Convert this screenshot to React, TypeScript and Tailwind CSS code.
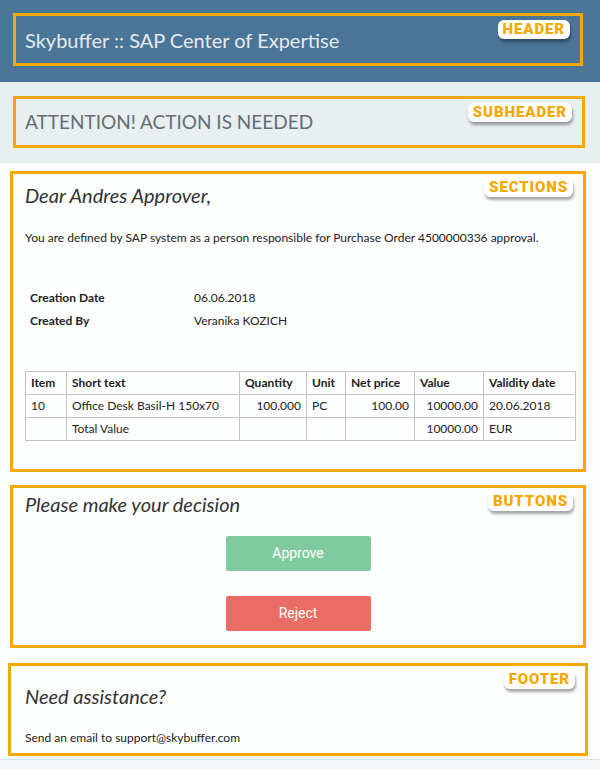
import React from 'react'

const body = "font-['Lato','Open_Sans',sans-serif]"

function Tag({ label }: { label: string }) {
  return (
    <span className="absolute right-[10px] top-[4px] rounded-[6px] bg-white px-[5px] py-[1px] font-['Roboto',sans-serif] text-[15px] font-black leading-[17px] tracking-[0.06em] text-[#f5a800] shadow-[1px_3px_3px_rgba(0,0,0,0.35)]">
      {label}
    </span>
  )
}

const rows = [
  ['10', 'Office Desk Basil-H 150x70', '100.000', 'PC', '100.00', '10000.00', '20.06.2018'],
  ['', 'Total Value', '', '', '', '10000.00', 'EUR'],
]

const cols = [
  { label: 'Item', w: 'w-[41px]' },
  { label: 'Short text', w: 'w-[173px]' },
  { label: 'Quantity', w: 'w-[67px]', right: true },
  { label: 'Unit', w: 'w-[39px]' },
  { label: 'Net price', w: 'w-[69px]', right: true },
  { label: 'Value', w: 'w-[69px]', right: true },
  { label: 'Validity date', w: 'w-[92px]' },
]

export default function App() {
  return (
    <div className={`w-[600px] bg-[#fdfefe] ${body} text-[#222]`}>
      {/* Header */}
      <div className="bg-[#4a7599] pl-[13px] pr-[17px] pt-[13px] pb-[16px]">
        <div className="relative flex h-[53px] items-center border-[3px] border-[#f5a800] pl-[9px]">
          <h1 className="text-[20px] text-[#e6eaee]">Skybuffer :: SAP Center of Expertise</h1>
          <Tag label="HEADER" />
        </div>
      </div>

      {/* Subheader */}
      <div className="bg-[#e7eff0] pl-[13px] pr-[15px] pt-[14px] pb-[15px]">
        <div className="relative flex h-[52px] items-center border-[3px] border-[#f5a800] pl-[9px]">
          <h2 className="text-[19px] text-[#666d72]">ATTENTION! ACTION IS NEEDED</h2>
          <Tag label="SUBHEADER" />
        </div>
      </div>

      {/* Sections */}
      <div className="relative mx-[10px] mt-[8px] h-[301px] w-[576px] border-[3px] border-[#f5a800] px-[12px] pt-[9px]">
        <Tag label="SECTIONS" />
        <p className="text-[20px] italic leading-[24px] text-[#333]">Dear Andres Approver,</p>
        <p className="mt-[24px] text-[12px] leading-[14px]">
          You are defined by SAP system as a person responsible for Purchase Order 4500000336 approval.
        </p>
        <div className="mt-[46px] flex flex-col gap-[9px] pl-[5px] text-[12px] leading-[14px]">
          <div className="flex">
            <span className="w-[164px] font-bold">Creation Date</span>
            <span>06.06.2018</span>
          </div>
          <div className="flex">
            <span className="w-[164px] font-bold">Created By</span>
            <span>Veranika KOZICH</span>
          </div>
        </div>
        <table className="mt-[43px] w-[550px] table-fixed border-collapse text-[12px] leading-[14px]">
          <thead>
            <tr className="h-[23px]">
              {cols.map((c) => (
                <th key={c.label} className={`${c.w} border border-[#c4c4c4] px-[5px] text-left font-bold`}>
                  {c.label}
                </th>
              ))}
            </tr>
          </thead>
          <tbody>
            {rows.map((r, i) => (
              <tr key={i} className="h-[23px]">
                {r.map((v, j) => (
                  <td
                    key={j}
                    className={`border border-[#c4c4c4] px-[5px] ${cols[j].right ? 'text-right' : 'text-left'}`}
                  >
                    {v}
                  </td>
                ))}
              </tr>
            ))}
          </tbody>
        </table>
      </div>

      {/* Buttons */}
      <div className="relative mx-[10px] mt-[13px] h-[163px] w-[576px] border-[3px] border-[#f5a800] px-[12px] pt-[4px]">
        <Tag label="BUTTONS" />
        <p className="text-[20px] italic leading-[24px] text-[#333]">Please make your decision</p>
        <div className="mt-[20px] flex flex-col items-center gap-[25px] font-['Roboto','Liberation_Sans',sans-serif] text-[14px] text-white">
          <button className="h-[35px] w-[145px] rounded-[2px] bg-[#7fcb9f]">Approve</button>
          <button className="h-[35px] w-[145px] rounded-[2px] bg-[#e96d64]">Reject</button>
        </div>
      </div>

      {/* Footer */}
      <div className="relative mx-[8px] mt-[15px] h-[93px] w-[580px] border-[3px] border-[#f5a800] px-[14px] pt-[18px]">
        <Tag label="FOOTER" />
        <p className="text-[20px] italic leading-[24px] text-[#333]">Need assistance?</p>
        <p className="mt-[23px] text-[12px] leading-[14px]">Send an email to support@skybuffer.com</p>
      </div>
      <div className="mt-[3px] h-[11px] border-t border-[#d6e4ef] bg-[#f4f8fb]" />
    </div>
  )
}
